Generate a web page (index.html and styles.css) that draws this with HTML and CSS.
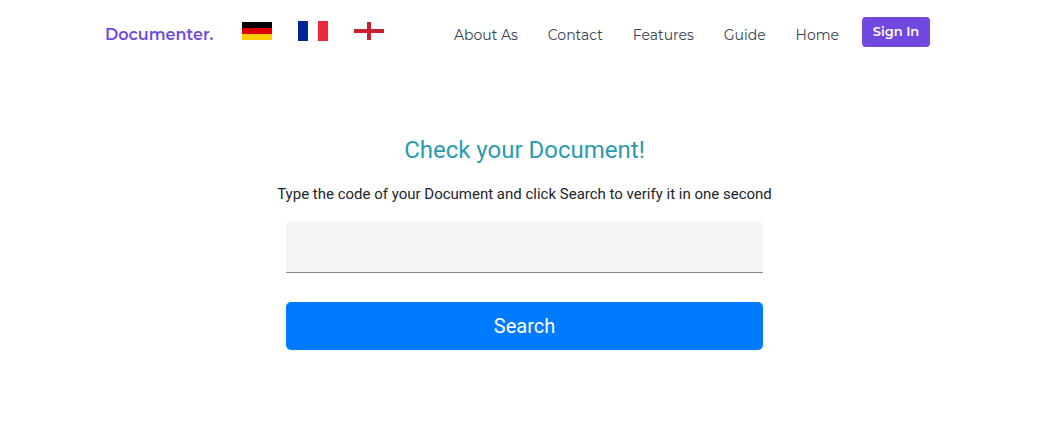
FILE: index.html
```
<!DOCTYPE html>
<html lang="en">
<head>
<meta charset="utf-8">
<meta name="viewport" content="width=device-width, initial-scale=1">
<title>Documenter</title>
<link rel="stylesheet" href="styles.css">
</head>
<body>
<header class="header">
  <a class="brand" href="#">Documenter.</a>
  <div class="languages">
    <a href="#" aria-label="Deutsch"><svg class="flag" width="30" height="18" viewBox="0 0 30 18"><path fill="#000" d="M0 0h30v6H0z"/><path fill="#d00" d="M0 6h30v6H0z"/><path fill="#ffce00" d="M0 12h30v6H0z"/></svg></a>
    <a href="#" aria-label="Français"><svg class="flag" width="30" height="20" viewBox="0 0 30 20"><path fill="#002395" d="M0 0h10v20H0z"/><path fill="#fff" d="M10 0h10v20H10z"/><path fill="#ed2939" d="M20 0h10v20H20z"/></svg></a>
    <a href="#" aria-label="English"><svg class="flag" width="30" height="18" viewBox="0 0 30 18"><path fill="#fff" d="M0 0h30v18H0z"/><path fill="#c8202e" d="M13 0h4v18h-4zM0 7h30v4H0z"/></svg></a>
  </div>
  <nav class="nav">
    <a href="#">About As</a>
    <a href="#">Contact</a>
    <a href="#">Features</a>
    <a href="#">Guide</a>
    <a href="#">Home</a>
  </nav>
  <button class="sign-in" type="button">Sign In</button>
</header>
<main class="main">
  <h1 class="title">Check your Document!</h1>
  <label class="hint" for="code">Type the code of your Document and click Search to verify it in one second</label>
  <form class="form">
    <input class="code" id="code" type="text">
    <button class="search" type="submit">Search</button>
  </form>
</main>
</body>
</html>
```
FILE: styles.css
```
* { box-sizing: border-box; }
body {
  margin: 0;
  background: #fff;
  color: #212529;
  font-family: Roboto, "Liberation Sans", sans-serif;
}
a { text-decoration: none; }
.header {
  display: flex;
  align-items: center;
  max-width: 827px;
  margin: 0 auto;
  padding: 17px 2px 0 0;
  font-family: Montserrat, Inter, "Open Sans", sans-serif;
}
.brand {
  width: 137px;
  padding-top: 6px;
  color: #6f4cdb;
  font-size: 16px;
  font-weight: 600;
  line-height: 24px;
}
.languages {
  display: flex;
  align-items: center;
  gap: 26px;
  padding-bottom: 2px;
}
.flag { display: block; }
.nav {
  display: flex;
  flex: 1;
  justify-content: space-between;
  padding: 6px 23px 0 70px;
  font-size: 14px;
  line-height: 24px;
}
.nav a { color: #36434f; }
.sign-in {
  width: 68px;
  height: 30px;
  padding: 0 0 2px;
  border: 0;
  border-radius: 4px;
  background: #7047e0;
  color: #fff;
  font-family: inherit;
  font-size: 13px;
  font-weight: 600;
}
.main {
  display: flex;
  flex-direction: column;
  align-items: center;
  padding: 87px 0 72px 12px;
}
.title {
  margin: 0;
  color: #2b9bb0;
  font-size: 24px;
  font-weight: 400;
  line-height: 32px;
}
.hint {
  margin-top: 16px;
  font-size: 15px;
  line-height: 24px;
}
.form {
  display: flex;
  flex-direction: column;
  gap: 29px;
  width: 100%;
  max-width: 477px;
  margin-top: 16px;
}
.code {
  width: 100%;
  height: 51px;
  padding: 0 16px;
  border: 0;
  border-bottom: 1px solid #8a8a8a;
  border-radius: 4px 4px 0 0;
  background: #f4f4f4;
  font: inherit;
}
.search {
  height: 48px;
  border: 0;
  border-radius: 5px;
  background: #007bff;
  color: #fff;
  font-family: inherit;
  font-size: 20px;
}
```
